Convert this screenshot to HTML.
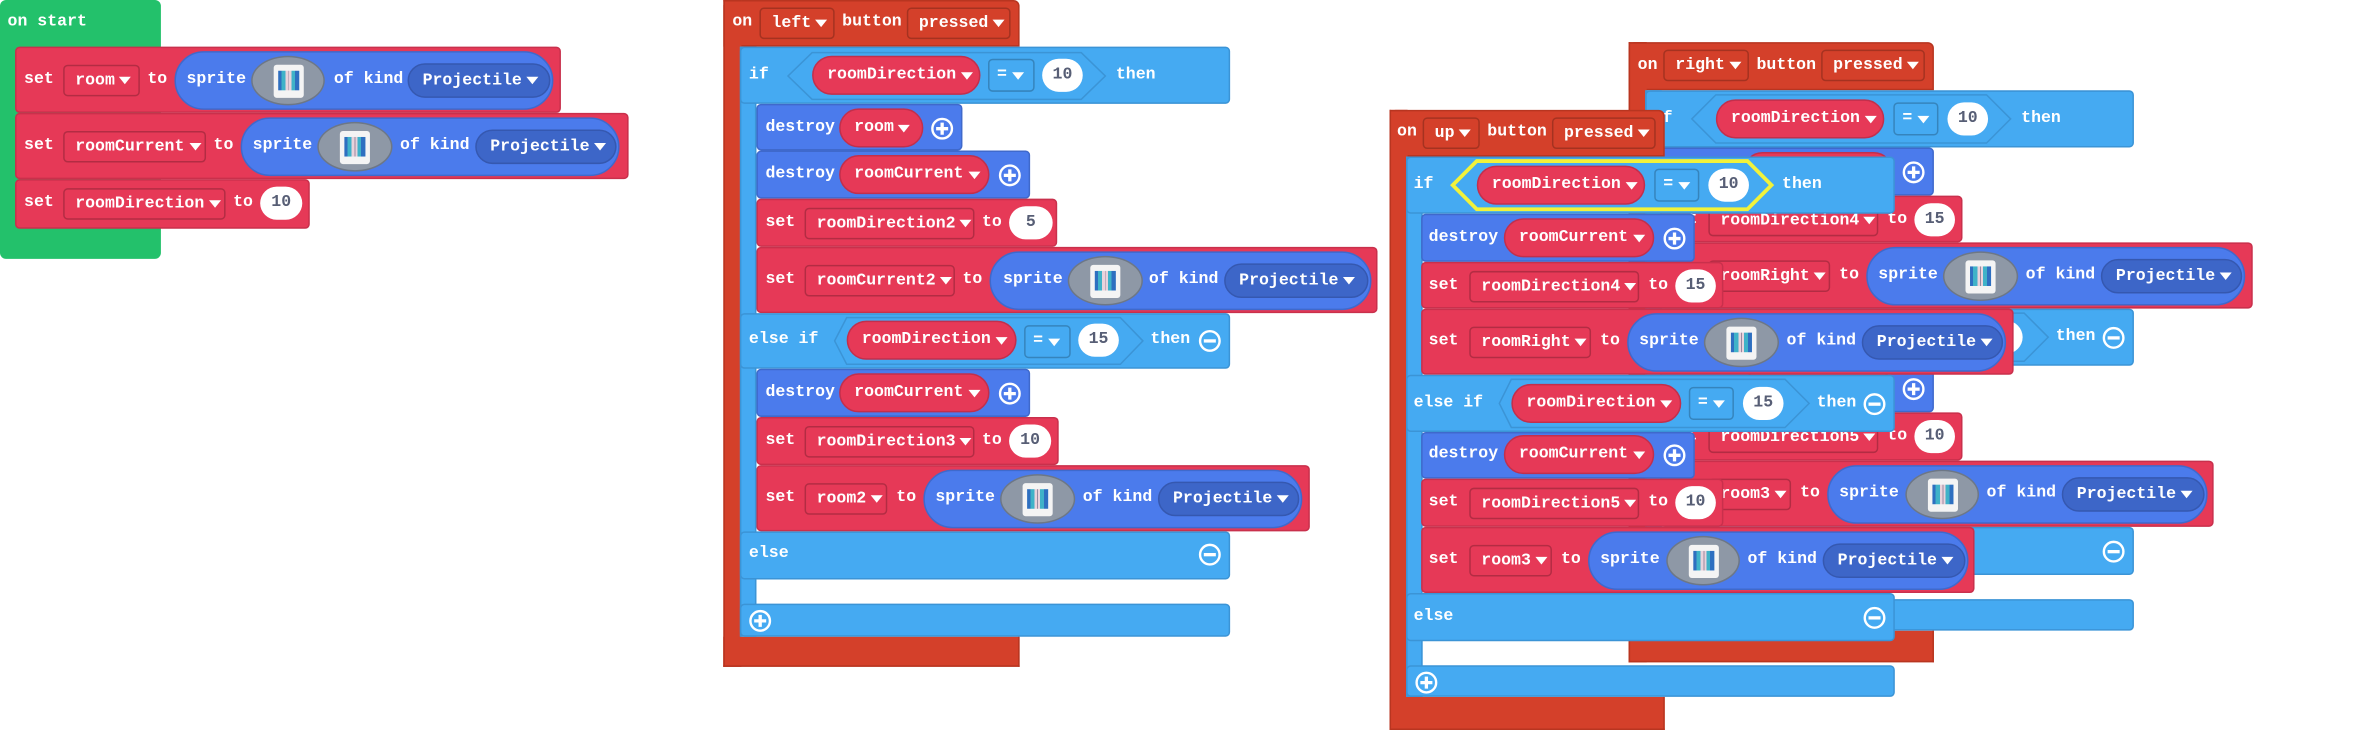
<!DOCTYPE html>
<html><head><meta charset="utf-8"><style>
*{box-sizing:border-box;margin:0;padding:0}
body{width:2358px;height:730px;background:#fff;overflow:hidden;position:relative}
#w{position:absolute;left:0;top:0;width:1568px;height:485px;transform:scale(1.50383,1.5052);transform-origin:0 0;font:bold 11px/14px "Liberation Mono","DejaVu Sans Mono",monospace;color:#fff}
.b{position:absolute}
.t{position:absolute;white-space:nowrap;height:14px}
.g{background:#23c16b;border-radius:4px}
.o{background:#d4402a;border:1px solid #b83520}
.r{background:#e63957;border:1px solid #c9304c;border-radius:3px}
.lb{background:#45aaf2;border:1px solid #3b94d6;border-radius:3px}
.bl{background:#4b7bec;border:1px solid #3f69cc;border-radius:3px}
.f{display:flex;align-items:center;padding-left:7px;white-space:nowrap}
.dd{border:1px solid rgba(0,0,0,.22);border-radius:3px}
.pr{background:#e63957;border:1px solid #c22f4c;border-radius:20px;padding-left:9px}
.pb{background:#4b7bec;border:1px solid #3f69cc;border-radius:30px}
.pk{background:#3d66c8;border:1px solid #3558b0;border-radius:15px;padding-left:9px}
.ov{background:#fff;border-radius:12px;color:#575e75;display:flex;align-items:center;justify-content:center}
.ci{background:#8e98a6;border:1px solid #6d7786;border-radius:50%}
.ci i{position:absolute;left:50%;top:50%;width:20px;height:22px;margin:-11px 0 0 -10px;background:#f4f4f4;border-radius:2px}
.ci i:before{content:"";position:absolute;left:3px;top:4px;width:14px;height:13px;background:linear-gradient(90deg,#2e6fc0 0,#2e6fc0 15%,#3fb2c8 15%,#3fb2c8 35%,#e9d3dc 35%,#e9d3dc 48%,#9a8aa0 48%,#9a8aa0 52%,#e9d3dc 52%,#e9d3dc 62%,#3fb2c8 62%,#3fb2c8 80%,#2e6fc0 80%)}
.a{display:inline-block;width:0;height:0;border-left:4px solid transparent;border-right:4px solid transparent;border-top:5px solid #fff;margin-left:3px}
svg{position:absolute;overflow:visible}
</style></head><body><div id="w">

<!-- on start -->
<div class="b g" style="left:0;top:0;width:107px;height:172px"></div>
<div class="t" style="left:5px;top:8px">on start</div>
<div class="b r" style="left:10px;top:31px;width:363px;height:44px"></div>
<div class="t" style="left:16px;top:46px">set</div>
<div class="b dd f" style="left:42px;top:43px;width:51px;height:21px">room<span class="a"></span></div>
<div class="t" style="left:98px;top:46px">to</div>
<div class="b pb" style="left:116px;top:34px;width:252px;height:39px"></div>
<div class="t" style="left:124px;top:46px">sprite</div>
<div class="b ci" style="left:167px;top:37px;width:49px;height:33px"><i></i></div>
<div class="t" style="left:222px;top:46px">of kind</div>
<div class="b pk f" style="left:271px;top:42px;width:95px;height:23px">Projectile<span class="a"></span></div>

<div class="b r" style="left:10px;top:75px;width:408px;height:44px"></div>
<div class="t" style="left:16px;top:90px">set</div>
<div class="b dd f" style="left:42px;top:87px;width:95px;height:21px">roomCurrent<span class="a"></span></div>
<div class="t" style="left:142px;top:90px">to</div>
<div class="b pb" style="left:160px;top:78px;width:252px;height:39px"></div>
<div class="t" style="left:168px;top:90px">sprite</div>
<div class="b ci" style="left:211px;top:81px;width:50px;height:33px"><i></i></div>
<div class="t" style="left:266px;top:90px">of kind</div>
<div class="b pk f" style="left:316px;top:86px;width:94px;height:23px">Projectile<span class="a"></span></div>

<div class="b r" style="left:10px;top:119px;width:196px;height:33px"></div>
<div class="t" style="left:16px;top:128px">set</div>
<div class="b dd f" style="left:42px;top:125px;width:108px;height:21px">roomDirection<span class="a"></span></div>
<div class="t" style="left:155px;top:128px">to</div>
<div class="b ov" style="left:173px;top:124px;width:28px;height:22px">10</div>

<!-- on left button pressed -->
<div class="b o" style="left:481px;top:0;width:197px;height:31px;border-radius:4px 4px 0 0"></div>
<div class="b o" style="left:481px;top:0;width:12px;height:443px;border-right:0"></div>
<div class="b o" style="left:481px;top:423px;width:197px;height:20px;border-top:0"></div>
<div class="t" style="left:487px;top:8px">on</div>
<div class="b dd f" style="left:505px;top:5px;width:50px;height:21px">left<span class="a"></span></div>
<div class="t" style="left:560px;top:8px">button</div>
<div class="b dd f" style="left:603px;top:5px;width:69px;height:21px">pressed<span class="a"></span></div>

<div class="b lb" style="left:492px;top:31px;width:11px;height:392px;border-radius:0"></div>
<div class="b lb" style="left:492px;top:31px;width:326px;height:38px"></div>
<div class="t" style="left:498px;top:43px">if</div>
<svg style="left:524px;top:35px" width="211" height="31"><polygon points="16,0 195,0 211,15.5 195,31 16,31 0,15.5" fill="#45aaf2" stroke="#3b94d6"/></svg>
<div class="b pr f" style="left:540px;top:37px;width:112px;height:26px">roomDirection<span class="a"></span></div>
<div class="b dd f" style="left:657px;top:39px;width:31px;height:22px;padding-left:5px">=<span class="a"></span></div>
<div class="b ov" style="left:693px;top:39px;width:27px;height:22px">10</div>
<div class="t" style="left:742px;top:43px">then</div>

<div class="b bl" style="left:503px;top:69px;width:137px;height:31px"></div>
<div class="t" style="left:509px;top:78px">destroy</div>
<div class="b pr f" style="left:558px;top:72px;width:56px;height:26px">room<span class="a"></span></div>
<svg style="left:619px;top:78px" width="15" height="15"><circle cx="7.5" cy="7.5" r="6.5" fill="none" stroke="#fff" stroke-width="1.6"/><path d="M7.5 3.5v8M3.5 7.5h8" stroke="#fff" stroke-width="2.2"/></svg>

<div class="b bl" style="left:503px;top:100px;width:182px;height:32px"></div>
<div class="t" style="left:509px;top:109px">destroy</div>
<div class="b pr f" style="left:558px;top:103px;width:100px;height:26px">roomCurrent<span class="a"></span></div>
<svg style="left:664px;top:109px" width="15" height="15"><circle cx="7.5" cy="7.5" r="6.5" fill="none" stroke="#fff" stroke-width="1.6"/><path d="M7.5 3.5v8M3.5 7.5h8" stroke="#fff" stroke-width="2.2"/></svg>

<div class="b r" style="left:503px;top:132px;width:200px;height:32px"></div>
<div class="t" style="left:509px;top:141px">set</div>
<div class="b dd f" style="left:535px;top:138px;width:113px;height:21px">roomDirection2<span class="a"></span></div>
<div class="t" style="left:653px;top:141px">to</div>
<div class="b ov" style="left:671px;top:137px;width:29px;height:22px">5</div>

<div class="b r" style="left:503px;top:164px;width:413px;height:44px"></div>
<div class="t" style="left:509px;top:179px">set</div>
<div class="b dd f" style="left:535px;top:176px;width:100px;height:21px">roomCurrent2<span class="a"></span></div>
<div class="t" style="left:640px;top:179px">to</div>
<div class="b pb" style="left:658px;top:167px;width:254px;height:39px"></div>
<div class="t" style="left:667px;top:179px">sprite</div>
<div class="b ci" style="left:710px;top:170px;width:50px;height:33px"><i></i></div>
<div class="t" style="left:764px;top:179px">of kind</div>
<div class="b pk f" style="left:814px;top:175px;width:96px;height:23px">Projectile<span class="a"></span></div>

<div class="b lb" style="left:492px;top:208px;width:326px;height:37px"></div>
<div class="t" style="left:498px;top:219px">else if</div>
<svg style="left:555px;top:211px" width="205" height="31"><polygon points="8,0 190,0 205,15.5 190,31 8,31 0,15.5" fill="#45aaf2" stroke="#3b94d6"/></svg>
<div class="b pr f" style="left:563px;top:213px;width:113px;height:26px">roomDirection<span class="a"></span></div>
<div class="b dd f" style="left:681px;top:216px;width:31px;height:22px;padding-left:5px">=<span class="a"></span></div>
<div class="b ov" style="left:717px;top:215px;width:27px;height:22px">15</div>
<div class="t" style="left:765px;top:219px">then</div>
<svg style="left:797px;top:219px" width="15" height="15"><circle cx="7.5" cy="7.5" r="6.5" fill="none" stroke="#fff" stroke-width="1.6"/><path d="M3.5 7.5h8" stroke="#fff" stroke-width="2.2"/></svg>

<div class="b bl" style="left:503px;top:245px;width:182px;height:32px"></div>
<div class="t" style="left:509px;top:254px">destroy</div>
<div class="b pr f" style="left:558px;top:248px;width:100px;height:26px">roomCurrent<span class="a"></span></div>
<svg style="left:664px;top:254px" width="15" height="15"><circle cx="7.5" cy="7.5" r="6.5" fill="none" stroke="#fff" stroke-width="1.6"/><path d="M7.5 3.5v8M3.5 7.5h8" stroke="#fff" stroke-width="2.2"/></svg>

<div class="b r" style="left:503px;top:277px;width:201px;height:32px"></div>
<div class="t" style="left:509px;top:286px">set</div>
<div class="b dd f" style="left:535px;top:283px;width:113px;height:21px">roomDirection3<span class="a"></span></div>
<div class="t" style="left:653px;top:286px">to</div>
<div class="b ov" style="left:671px;top:282px;width:28px;height:22px">10</div>

<div class="b r" style="left:503px;top:309px;width:368px;height:44px"></div>
<div class="t" style="left:509px;top:324px">set</div>
<div class="b dd f" style="left:535px;top:321px;width:55px;height:21px">room2<span class="a"></span></div>
<div class="t" style="left:596px;top:324px">to</div>
<div class="b pb" style="left:614px;top:312px;width:252px;height:39px"></div>
<div class="t" style="left:622px;top:324px">sprite</div>
<div class="b ci" style="left:665px;top:315px;width:50px;height:33px"><i></i></div>
<div class="t" style="left:720px;top:324px">of kind</div>
<div class="b pk f" style="left:770px;top:320px;width:94px;height:23px">Projectile<span class="a"></span></div>

<div class="b lb" style="left:492px;top:353px;width:326px;height:32px"></div>
<div class="t" style="left:498px;top:361px">else</div>
<svg style="left:797px;top:361px" width="15" height="15"><circle cx="7.5" cy="7.5" r="6.5" fill="none" stroke="#fff" stroke-width="1.6"/><path d="M3.5 7.5h8" stroke="#fff" stroke-width="2.2"/></svg>
<div class="b lb" style="left:492px;top:401px;width:326px;height:22px"></div>
<svg style="left:498px;top:405px" width="15" height="15"><circle cx="7.5" cy="7.5" r="6.5" fill="none" stroke="#fff" stroke-width="1.6"/><path d="M7.5 3.5v8M3.5 7.5h8" stroke="#fff" stroke-width="2.2"/></svg>

<!-- on right (behind), shifted copy -->
<div class="b" style="left:159px;top:-44px;width:1568px;height:485px">
<div class="b o" style="left:924px;top:72px;width:203px;height:32px;border-radius:4px 4px 0 0"></div>
<div class="b o" style="left:924px;top:72px;width:12px;height:412px;border-right:0"></div>
<div class="b o" style="left:924px;top:463px;width:203px;height:21px;border-top:0"></div>
<div class="t" style="left:930px;top:81px">on</div>
<div class="b dd f" style="left:947px;top:77px;width:57px;height:21px">right<span class="a"></span></div>
<div class="t" style="left:1009px;top:81px">button</div>
<div class="b dd f" style="left:1052px;top:77px;width:69px;height:21px">pressed<span class="a"></span></div>
<div class="b lb" style="left:935px;top:104px;width:11px;height:359px;border-radius:0"></div>
<div class="b lb" style="left:935px;top:104px;width:325px;height:38px"></div>
<div class="t" style="left:940px;top:116px">if</div>
<svg style="left:966px;top:107px" width="212" height="32"><polygon points="16,0 196,0 212,16 196,32 16,32 0,16" fill="#45aaf2" stroke="#3b94d6"/></svg>
<div class="b pr f" style="left:982px;top:110px;width:112px;height:26px">roomDirection<span class="a"></span></div>
<div class="b dd f" style="left:1100px;top:112px;width:30px;height:22px;padding-left:5px">=<span class="a"></span></div>
<div class="b ov" style="left:1136px;top:112px;width:27px;height:22px">10</div>
<div class="t" style="left:1185px;top:116px">then</div>
<div class="b bl" style="left:945px;top:142px;width:182px;height:32px"></div>
<div class="t" style="left:950px;top:151px">destroy</div>
<div class="b pr f" style="left:1000px;top:145px;width:100px;height:26px">roomCurrent<span class="a"></span></div>
<svg style="left:1106px;top:151px" width="15" height="15"><circle cx="7.5" cy="7.5" r="6.5" fill="none" stroke="#fff" stroke-width="1.6"/><path d="M7.5 3.5v8M3.5 7.5h8" stroke="#fff" stroke-width="2.2"/></svg>
<div class="b r" style="left:945px;top:174px;width:201px;height:31px"></div>
<div class="t" style="left:950px;top:183px">set</div>
<div class="b dd f" style="left:977px;top:180px;width:113px;height:21px">roomDirection4<span class="a"></span></div>
<div class="t" style="left:1096px;top:183px">to</div>
<div class="b ov" style="left:1114px;top:179px;width:27px;height:22px">15</div>
<div class="b r" style="left:945px;top:205px;width:394px;height:44px"></div>
<div class="t" style="left:950px;top:220px">set</div>
<div class="b dd f" style="left:977px;top:217px;width:81px;height:21px">roomRight<span class="a"></span></div>
<div class="t" style="left:1064px;top:220px">to</div>
<div class="b pb" style="left:1082px;top:208px;width:252px;height:39px"></div>
<div class="t" style="left:1090px;top:220px">sprite</div>
<div class="b ci" style="left:1133px;top:211px;width:50px;height:33px"><i></i></div>
<div class="t" style="left:1188px;top:220px">of kind</div>
<div class="b pk f" style="left:1238px;top:216px;width:94px;height:23px">Projectile<span class="a"></span></div>
<div class="b lb" style="left:935px;top:249px;width:325px;height:38px"></div>
<div class="t" style="left:940px;top:261px">else if</div>
<svg style="left:997px;top:252px" width="206" height="32"><polygon points="8,0 190,0 206,16 190,32 8,32 0,16" fill="#45aaf2" stroke="#3b94d6"/></svg>
<div class="b pr f" style="left:1005px;top:255px;width:113px;height:26px">roomDirection<span class="a"></span></div>
<div class="b dd f" style="left:1123px;top:257px;width:30px;height:22px;padding-left:5px">=<span class="a"></span></div>
<div class="b ov" style="left:1159px;top:257px;width:27px;height:22px">15</div>
<div class="t" style="left:1208px;top:261px">then</div>
<svg style="left:1239px;top:261px" width="15" height="15"><circle cx="7.5" cy="7.5" r="6.5" fill="none" stroke="#fff" stroke-width="1.6"/><path d="M3.5 7.5h8" stroke="#fff" stroke-width="2.2"/></svg>
<div class="b bl" style="left:945px;top:287px;width:182px;height:31px"></div>
<div class="t" style="left:950px;top:295px">destroy</div>
<div class="b pr f" style="left:1000px;top:289px;width:100px;height:26px">roomCurrent<span class="a"></span></div>
<svg style="left:1106px;top:295px" width="15" height="15"><circle cx="7.5" cy="7.5" r="6.5" fill="none" stroke="#fff" stroke-width="1.6"/><path d="M7.5 3.5v8M3.5 7.5h8" stroke="#fff" stroke-width="2.2"/></svg>
<div class="b r" style="left:945px;top:318px;width:201px;height:32px"></div>
<div class="t" style="left:950px;top:327px">set</div>
<div class="b dd f" style="left:977px;top:324px;width:113px;height:21px">roomDirection5<span class="a"></span></div>
<div class="t" style="left:1096px;top:327px">to</div>
<div class="b ov" style="left:1114px;top:323px;width:27px;height:22px">10</div>
<div class="b r" style="left:945px;top:350px;width:368px;height:44px"></div>
<div class="t" style="left:950px;top:365px">set</div>
<div class="b dd f" style="left:977px;top:362px;width:55px;height:21px">room3<span class="a"></span></div>
<div class="t" style="left:1038px;top:365px">to</div>
<div class="b pb" style="left:1056px;top:353px;width:253px;height:39px"></div>
<div class="t" style="left:1064px;top:365px">sprite</div>
<div class="b ci" style="left:1108px;top:356px;width:49px;height:33px"><i></i></div>
<div class="t" style="left:1162px;top:365px">of kind</div>
<div class="b pk f" style="left:1212px;top:361px;width:95px;height:23px">Projectile<span class="a"></span></div>
<div class="b lb" style="left:935px;top:394px;width:325px;height:32px"></div>
<div class="t" style="left:940px;top:403px">else</div>
<svg style="left:1239px;top:403px" width="15" height="15"><circle cx="7.5" cy="7.5" r="6.5" fill="none" stroke="#fff" stroke-width="1.6"/><path d="M3.5 7.5h8" stroke="#fff" stroke-width="2.2"/></svg>
<div class="b lb" style="left:935px;top:442px;width:325px;height:21px"></div>
<svg style="left:941px;top:446px" width="15" height="15"><circle cx="7.5" cy="7.5" r="6.5" fill="none" stroke="#fff" stroke-width="1.6"/><path d="M7.5 3.5v8M3.5 7.5h8" stroke="#fff" stroke-width="2.2"/></svg>
</div>

<!-- on up button pressed -->
<div class="b o" style="left:924px;top:73px;width:183px;height:31px;border-radius:4px 4px 0 0"></div>
<div class="b o" style="left:924px;top:73px;width:12px;height:412px;border-right:0"></div>
<div class="b o" style="left:924px;top:463px;width:183px;height:22px;border-top:0"></div>
<div class="t" style="left:929px;top:81px">on</div>
<div class="b dd f" style="left:946px;top:78px;width:38px;height:21px">up<span class="a"></span></div>
<div class="t" style="left:989px;top:81px">button</div>
<div class="b dd f" style="left:1032px;top:78px;width:69px;height:21px">pressed<span class="a"></span></div>
<div class="b lb" style="left:935px;top:104px;width:11px;height:359px;border-radius:0"></div>
<div class="b lb" style="left:935px;top:104px;width:325px;height:38px"></div>
<div class="t" style="left:940px;top:116px">if</div>
<svg style="left:966px;top:107px" width="212" height="32"><polygon points="16,0 196,0 212,16 196,32 16,32 0,16" fill="#45aaf2" stroke="#f2f23a" stroke-width="2.5"/></svg>
<div class="b pr f" style="left:982px;top:110px;width:112px;height:26px">roomDirection<span class="a"></span></div>
<div class="b dd f" style="left:1100px;top:112px;width:30px;height:22px;padding-left:5px">=<span class="a"></span></div>
<div class="b ov" style="left:1136px;top:112px;width:27px;height:22px">10</div>
<div class="t" style="left:1185px;top:116px">then</div>
<div class="b bl" style="left:945px;top:142px;width:182px;height:32px"></div>
<div class="t" style="left:950px;top:151px">destroy</div>
<div class="b pr f" style="left:1000px;top:145px;width:100px;height:26px">roomCurrent<span class="a"></span></div>
<svg style="left:1106px;top:151px" width="15" height="15"><circle cx="7.5" cy="7.5" r="6.5" fill="none" stroke="#fff" stroke-width="1.6"/><path d="M7.5 3.5v8M3.5 7.5h8" stroke="#fff" stroke-width="2.2"/></svg>
<div class="b r" style="left:945px;top:174px;width:201px;height:31px"></div>
<div class="t" style="left:950px;top:183px">set</div>
<div class="b dd f" style="left:977px;top:180px;width:113px;height:21px">roomDirection4<span class="a"></span></div>
<div class="t" style="left:1096px;top:183px">to</div>
<div class="b ov" style="left:1114px;top:179px;width:27px;height:22px">15</div>
<div class="b r" style="left:945px;top:205px;width:394px;height:44px"></div>
<div class="t" style="left:950px;top:220px">set</div>
<div class="b dd f" style="left:977px;top:217px;width:81px;height:21px">roomRight<span class="a"></span></div>
<div class="t" style="left:1064px;top:220px">to</div>
<div class="b pb" style="left:1082px;top:208px;width:252px;height:39px"></div>
<div class="t" style="left:1090px;top:220px">sprite</div>
<div class="b ci" style="left:1133px;top:211px;width:50px;height:33px"><i></i></div>
<div class="t" style="left:1188px;top:220px">of kind</div>
<div class="b pk f" style="left:1238px;top:216px;width:94px;height:23px">Projectile<span class="a"></span></div>
<div class="b lb" style="left:935px;top:249px;width:325px;height:38px"></div>
<div class="t" style="left:940px;top:261px">else if</div>
<svg style="left:997px;top:252px" width="206" height="32"><polygon points="8,0 190,0 206,16 190,32 8,32 0,16" fill="#45aaf2" stroke="#3b94d6"/></svg>
<div class="b pr f" style="left:1005px;top:255px;width:113px;height:26px">roomDirection<span class="a"></span></div>
<div class="b dd f" style="left:1123px;top:257px;width:30px;height:22px;padding-left:5px">=<span class="a"></span></div>
<div class="b ov" style="left:1159px;top:257px;width:27px;height:22px">15</div>
<div class="t" style="left:1208px;top:261px">then</div>
<svg style="left:1239px;top:261px" width="15" height="15"><circle cx="7.5" cy="7.5" r="6.5" fill="none" stroke="#fff" stroke-width="1.6"/><path d="M3.5 7.5h8" stroke="#fff" stroke-width="2.2"/></svg>
<div class="b bl" style="left:945px;top:287px;width:182px;height:31px"></div>
<div class="t" style="left:950px;top:295px">destroy</div>
<div class="b pr f" style="left:1000px;top:289px;width:100px;height:26px">roomCurrent<span class="a"></span></div>
<svg style="left:1106px;top:295px" width="15" height="15"><circle cx="7.5" cy="7.5" r="6.5" fill="none" stroke="#fff" stroke-width="1.6"/><path d="M7.5 3.5v8M3.5 7.5h8" stroke="#fff" stroke-width="2.2"/></svg>
<div class="b r" style="left:945px;top:318px;width:201px;height:32px"></div>
<div class="t" style="left:950px;top:327px">set</div>
<div class="b dd f" style="left:977px;top:324px;width:113px;height:21px">roomDirection5<span class="a"></span></div>
<div class="t" style="left:1096px;top:327px">to</div>
<div class="b ov" style="left:1114px;top:323px;width:27px;height:22px">10</div>
<div class="b r" style="left:945px;top:350px;width:368px;height:44px"></div>
<div class="t" style="left:950px;top:365px">set</div>
<div class="b dd f" style="left:977px;top:362px;width:55px;height:21px">room3<span class="a"></span></div>
<div class="t" style="left:1038px;top:365px">to</div>
<div class="b pb" style="left:1056px;top:353px;width:253px;height:39px"></div>
<div class="t" style="left:1064px;top:365px">sprite</div>
<div class="b ci" style="left:1108px;top:356px;width:49px;height:33px"><i></i></div>
<div class="t" style="left:1162px;top:365px">of kind</div>
<div class="b pk f" style="left:1212px;top:361px;width:95px;height:23px">Projectile<span class="a"></span></div>
<div class="b lb" style="left:935px;top:394px;width:325px;height:32px"></div>
<div class="t" style="left:940px;top:403px">else</div>
<svg style="left:1239px;top:403px" width="15" height="15"><circle cx="7.5" cy="7.5" r="6.5" fill="none" stroke="#fff" stroke-width="1.6"/><path d="M3.5 7.5h8" stroke="#fff" stroke-width="2.2"/></svg>
<div class="b lb" style="left:935px;top:442px;width:325px;height:21px"></div>
<svg style="left:941px;top:446px" width="15" height="15"><circle cx="7.5" cy="7.5" r="6.5" fill="none" stroke="#fff" stroke-width="1.6"/><path d="M7.5 3.5v8M3.5 7.5h8" stroke="#fff" stroke-width="2.2"/></svg>

</div></body></html>
